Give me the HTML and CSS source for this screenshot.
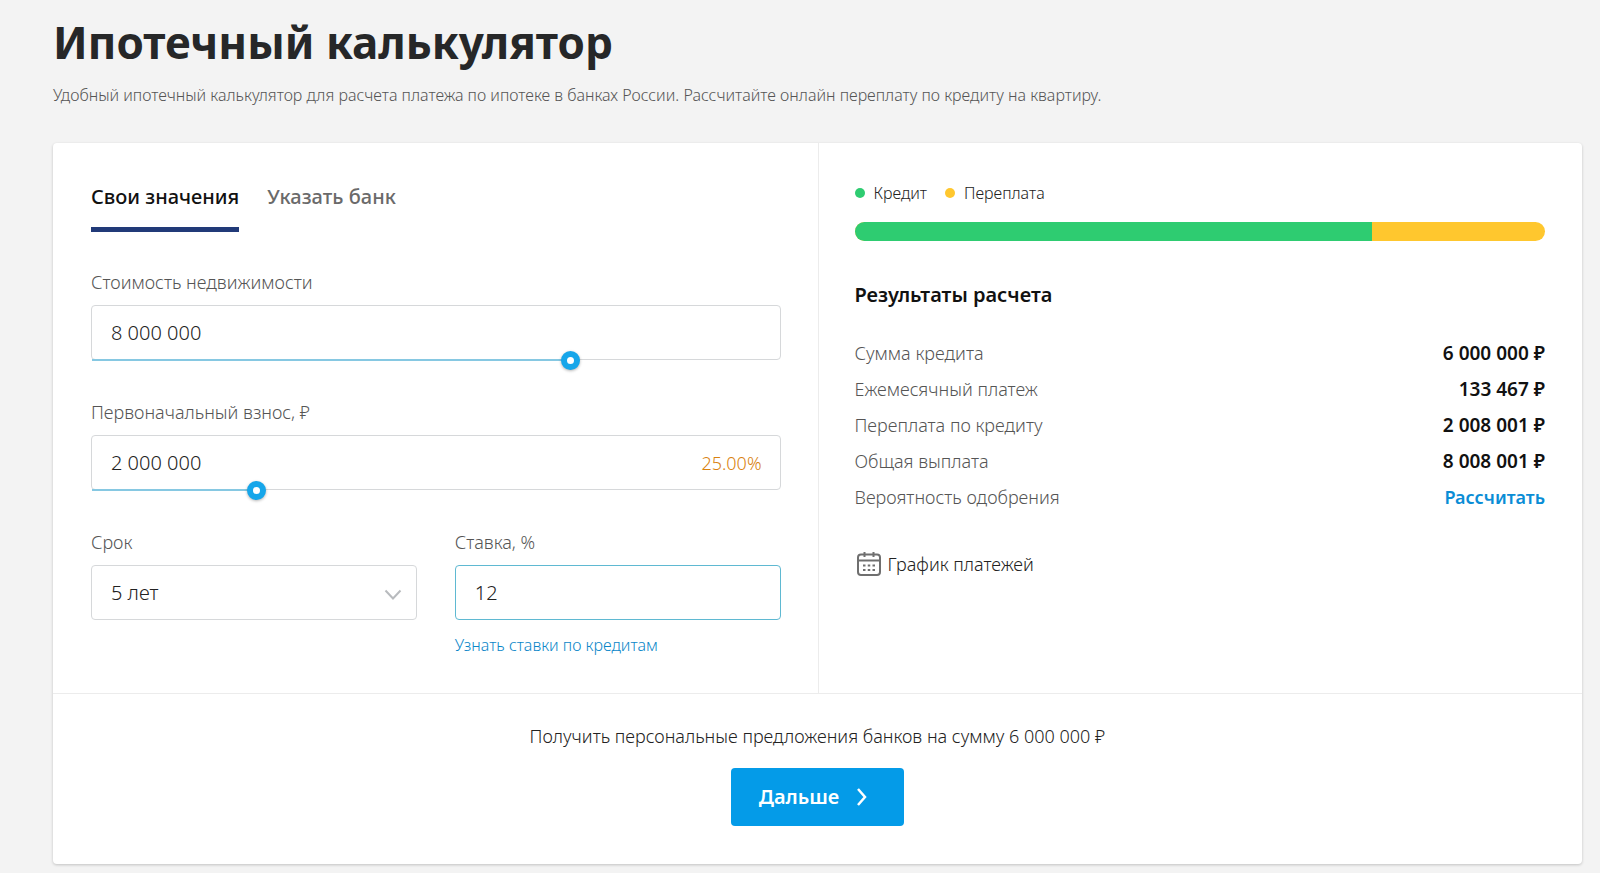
FILE: index.html
```
<!DOCTYPE html>
<html lang="ru">
<head>
<meta charset="utf-8">
<meta name="viewport" content="width=device-width, initial-scale=1">
<title>Ипотечный калькулятор</title>
<link rel="stylesheet" href="styles.css">
</head>
<body>
<main class="page">
  <h1 class="title">Ипотечный калькулятор</h1>
  <p class="subtitle">Удобный ипотечный калькулятор для расчета платежа по ипотеке в банках России. Рассчитайте онлайн переплату по кредиту на квартиру.</p>

  <form class="card">
    <div class="columns">
      <section class="panel">
        <div class="tabs" role="tablist">
          <button class="tab tab-active" type="button" role="tab" aria-selected="true">Свои значения</button>
          <button class="tab" type="button" role="tab" aria-selected="false">Указать банк</button>
        </div>

        <div class="fields">
          <div class="field">
            <label class="label" for="price">Стоимость недвижимости</label>
            <div class="control">
              <input class="input" id="price" type="text" value="8 000 000">
              <input class="slider" type="range" min="0" max="1000" value="702" aria-label="Стоимость недвижимости, ползунок" style="--fill: 70%">
            </div>
          </div>

          <div class="field">
            <label class="label" for="down">Первоначальный взнос, ₽</label>
            <div class="control">
              <input class="input" id="down" type="text" value="2 000 000">
              <span class="percent">25.00%</span>
              <input class="slider" type="range" min="0" max="1000" value="232" aria-label="Первоначальный взнос, ползунок" style="--fill: 23%">
            </div>
          </div>

          <div class="field-row">
            <div class="field">
              <label class="label" for="term">Срок</label>
              <div class="control">
                <select class="input select" id="term"><option>5 лет</option></select>
                <svg class="chevron" width="18" height="12" viewBox="0 0 18 12" aria-hidden="true"><path d="M1.5 1.5 9 9.5l7.5-8" fill="none" stroke="currentColor" stroke-width="2"/></svg>
              </div>
            </div>
            <div class="field">
              <label class="label" for="rate">Ставка, %</label>
              <div class="control">
                <input class="input input-active" id="rate" type="text" value="12">
              </div>
              <a class="rates-link" href="#rates">Узнать ставки по кредитам</a>
            </div>
          </div>
        </div>
      </section>

      <section class="panel panel-results">
        <div class="legend">
          <span class="legend-item"><span class="dot dot-credit"></span>Кредит</span>
          <span class="legend-item"><span class="dot dot-over"></span>Переплата</span>
        </div>
        <div class="bar">
          <div class="bar-credit" style="width: 75%"></div>
        </div>
        <h2 class="results-title">Результаты расчета</h2>
        <dl class="results">
          <div class="result"><dt>Сумма кредита</dt><dd>6 000 000 ₽</dd></div>
          <div class="result"><dt>Ежемесячный платеж</dt><dd>133 467 ₽</dd></div>
          <div class="result"><dt>Переплата по кредиту</dt><dd>2 008 001 ₽</dd></div>
          <div class="result"><dt>Общая выплата</dt><dd>8 008 001 ₽</dd></div>
          <div class="result"><dt>Вероятность одобрения</dt><dd><a class="calc-link" href="#approval">Рассчитать</a></dd></div>
        </dl>
        <button class="schedule" type="button">
          <svg width="24" height="24" viewBox="0 0 24 24" fill="none" stroke="#6f6f6f" stroke-width="2" aria-hidden="true">
            <rect x="1" y="2.5" width="22" height="20.5" rx="3"/>
            <path d="M1 8.5h22"/>
            <path d="M7.5 0v5M16.500 0v5"/>
            <path d="M6 13.500h2.500m2.250 0h2.500m2.250 0h2.500M6 18h2.500m2.250 0h2.500m2.250 0h2.500"/>
          </svg>
          График платежей
        </button>
      </section>
    </div>

    <div class="footer">
      <p class="offer">Получить персональные предложения банков на сумму 6 000 000 ₽</p>
      <button class="next" type="button">
        Дальше
        <svg width="12" height="18" viewBox="0 0 12 18" aria-hidden="true"><path d="m2 1 7 8-7 8" fill="none" stroke="currentColor" stroke-width="2.5"/></svg>
      </button>
    </div>
  </form>
</main>
</body>
</html>
```
FILE: styles.css
```
* { box-sizing: border-box; }

body {
  margin: 0;
  background: #f3f3f3;
  color: #222;
  font-family: "Noto Sans", "Open Sans", sans-serif;
  font-size: 18px;
  font-weight: 300;
  line-height: 24px;
}

button, input, select { font: inherit; color: inherit; }
button { border: 0; background: none; padding: 0; cursor: pointer; }
a { text-decoration: none; }

.page { padding: 10px 18px 8px 53px; }

.title {
  margin: 0;
  color: #262728;
  font-size: 44px;
  font-weight: 700;
  line-height: 64px;
}

.subtitle {
  margin: 9px 0 36px;
  color: #555;
  font-size: 16px;
}

.card {
  background: #fff;
  border-radius: 4px;
  box-shadow: 0 1px 3px rgba(0, 0, 0, 0.2);
}

.columns {
  display: grid;
  grid-template-columns: 1fr 1fr;
  border-bottom: 1px solid #ececec;
}

.panel { padding: 38px 37px 36px 38px; }
.panel-results { border-left: 1px solid #ececec; padding-left: 36px; }

.tabs { display: flex; gap: 28px; }

.tab {
  padding: 2px 0 16px;
  border-bottom: 5px solid transparent;
  color: #6a6a6a;
  font-size: 20px;
  font-weight: 500;
  line-height: 28px;
}

.tab-active { color: #111; border-color: #213a78; }

.fields {
  display: flex;
  flex-direction: column;
  gap: 40px;
  margin-top: 38px;
}

.field-row { display: grid; grid-template-columns: 1fr 1fr; gap: 38px; }

.label { display: block; margin-bottom: 11px; color: #555; }

.control { position: relative; }

.input {
  display: block;
  width: 100%;
  height: 55px;
  padding: 0 19px;
  border: 1px solid #d6d8da;
  border-radius: 4px;
  background: #fff;
  color: #222;
  font-size: 20px;
  outline: none;
}

.input-active { border-color: #5fb9d2; }

.select { appearance: none; padding-right: 48px; }

.chevron {
  position: absolute;
  right: 15px;
  top: 24px;
  color: #b8bbbe;
  pointer-events: none;
}

.percent {
  position: absolute;
  right: 19px;
  top: 16px;
  color: #d9820f;
}

.slider {
  position: absolute;
  left: 1px;
  right: 0;
  bottom: -10px;
  width: calc(100% - 2px);
  height: 20px;
  margin: 0;
  appearance: none;
  background: none;
}

.slider::-webkit-slider-runnable-track {
  height: 2px;
  background: linear-gradient(#86c8e2, #86c8e2) 0 0 / var(--fill) 100% no-repeat;
}

.slider::-webkit-slider-thumb {
  appearance: none;
  width: 19px;
  height: 19px;
  margin-top: -8px;
  border: 6px solid #16a6ea;
  border-radius: 50%;
  background: #fff;
  box-shadow: 0 1px 3px rgba(0, 0, 0, 0.3);
}

.rates-link {
  display: inline-block;
  margin-top: 13px;
  color: #0a86c8;
  font-size: 16px;
}

.legend { display: flex; gap: 18px; font-size: 16px; }
.legend-item { display: flex; align-items: center; gap: 9px; }
.dot { width: 10px; height: 10px; border-radius: 50%; }
.dot-credit { background: #2ecc71; }
.dot-over { background: #ffc72e; }

.bar {
  height: 19px;
  margin-top: 17px;
  overflow: hidden;
  border-radius: 10px;
  background: #ffc72e;
}

.bar-credit { height: 100%; background: #2ecc71; }

.results-title {
  margin: 40px 0 32px;
  color: #111;
  font-size: 20px;
  font-weight: 600;
  line-height: 28px;
}

.results { display: grid; gap: 12px; margin: 0; }
.result { display: flex; justify-content: space-between; }
.result dt { color: #555; }
.result dd { margin: 0; color: #111; font-size: 19px; font-weight: 600; }
.calc-link { color: #0a8dd6; font-size: 18px; }

.schedule {
  display: flex;
  align-items: center;
  gap: 7px;
  margin: 43px 0 0 2px;
  color: #222;
}

.footer {
  display: flex;
  flex-direction: column;
  align-items: center;
  padding: 30px 24px 38px;
}

.offer { margin: 0 0 20px; color: #222; }

.next {
  display: flex;
  align-items: center;
  gap: 17px;
  padding: 17px 36px 17px 28px;
  border-radius: 4px;
  background: #049be8;
  color: #fff;
  font-size: 20px;
  font-weight: 600;
}
```
